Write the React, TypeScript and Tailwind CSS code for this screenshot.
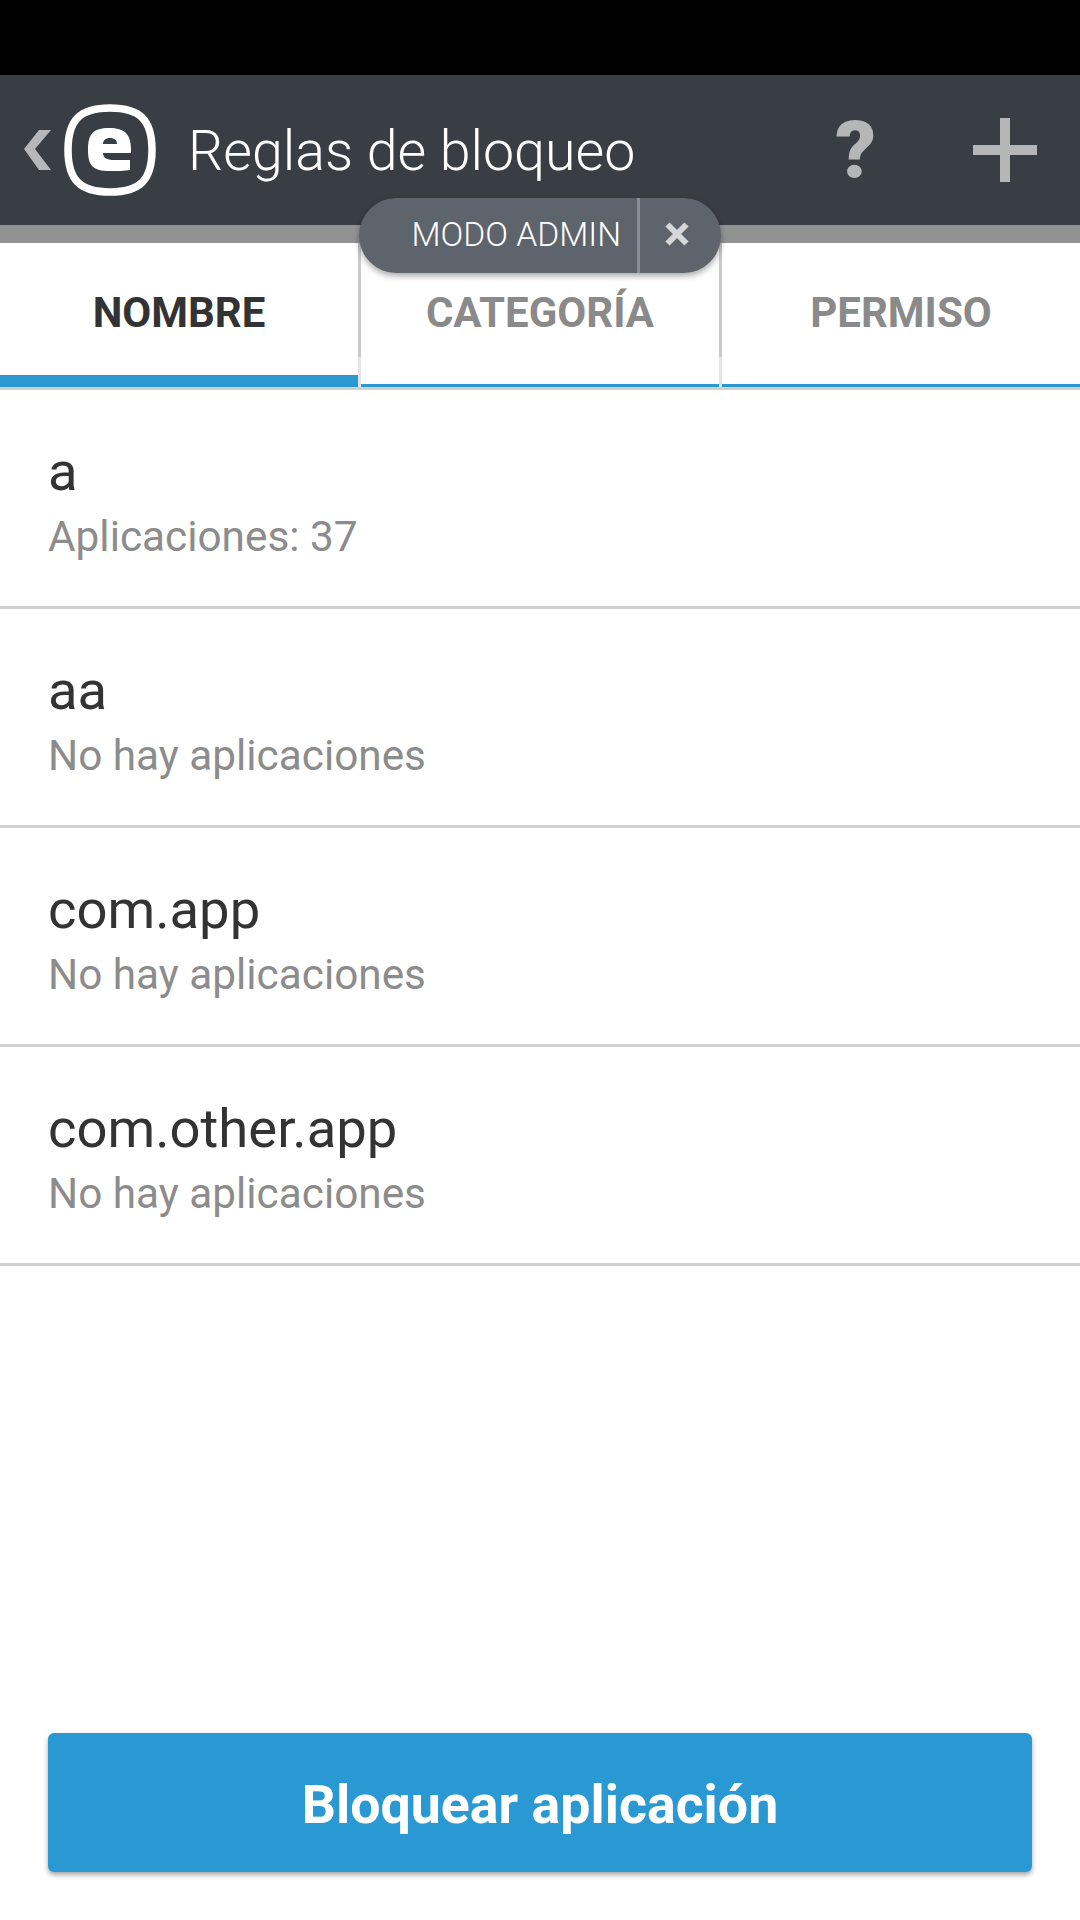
const rules = [
  { name: 'a', detail: 'Aplicaciones: 37' },
  { name: 'aa', detail: 'No hay aplicaciones' },
  { name: 'com.app', detail: 'No hay aplicaciones' },
  { name: 'com.other.app', detail: 'No hay aplicaciones' },
];

function EsetLogo() {
  return (
    <svg width="92" height="92" viewBox="0 0 92 92" className="shrink-0">
      <path
        d="M46 4 C76 4 88 16 88 46 C88 76 76 88 46 88 C16 88 4 76 4 46 C4 16 16 4 46 4 Z"
        fill="none"
        stroke="#fff"
        strokeWidth="7.5"
      />
      <path
        fillRule="evenodd"
        fill="#fff"
        d="M45 24 C61 24 67 30 67 46 L67 49 L39 49 C39 54 43 56 50 56 L66 56 L66 66 C60 67 54 67 46 67 C29 67 24 62 24 46 C24 30 29 24 45 24 Z M39 40 L53 40 C53 36 50 34 46 34 C42 34 39 36 39 40 Z"
      />
    </svg>
  );
}

function Header() {
  return (
    <div className="flex h-[150px] items-center bg-[#393d44] pl-6 font-['Roboto',sans-serif]">
      <svg width="27" height="40" viewBox="0 0 27 40" className="shrink-0">
        <polygon points="27,0 15,0 0,19 15,40 27,40 11,19" fill="#b5b7ba" />
      </svg>
      <div className="ml-[13px]">
        <EsetLogo />
      </div>
      <div className="ml-[32px] flex-1 pt-[4px] text-[55.5px] font-light leading-none text-white">Reglas de bloqueo</div>
      <div className="mr-[97px] pt-[2px] text-[80px] font-black leading-none text-[#b5b6b8]">?</div>
      <svg width="64" height="64" viewBox="0 0 64 64" className="mr-[43px] shrink-0">
        <rect x="27" y="0" width="10" height="64" fill="#b5b6b8" />
        <rect x="0" y="27" width="64" height="10" fill="#b5b6b8" />
      </svg>
    </div>
  );
}

function TabDivider() {
  return (
    <div className="flex w-[3px] flex-col">
      <div className="flex-1 bg-[#c9cacc]" />
      <div className="h-[30px] bg-[#e3e4e5]" />
    </div>
  );
}

function Tabs() {
  return (
    <div className="flex h-[147px] border-b-[3px] border-[#cfd1d3] text-[42px] font-bold">
      <div className="flex flex-1 items-center justify-center border-b-[12px] border-[#2a99d3] pt-[6px] text-[#333333]">
        NOMBRE
      </div>
      <TabDivider />
      <div className="flex flex-1 items-center justify-center border-b-[3px] border-[#2a99d3] pb-[2px] text-[#8a8a8a]">
        CATEGORÍA
      </div>
      <TabDivider />
      <div className="flex flex-1 items-center justify-center border-b-[3px] border-[#2a99d3] pb-[2px] text-[#8a8a8a]">
        PERMISO
      </div>
    </div>
  );
}

function AdminPill() {
  return (
    <div className="absolute left-[359px] top-[198px] flex h-[75px] w-[362px] items-center rounded-full bg-[#5e646c] text-[33.6px] font-light text-white shadow-[0_3px_6px_rgba(0,0,0,0.35)]">
      <div className="w-[278px] pr-4 text-right">MODO ADMIN</div>
      <div className="h-full w-[3px] bg-[#8a8f95]" />
      <svg width="24" height="24" viewBox="0 0 24 24" className="ml-[25px] shrink-0 -translate-y-[2px]">
        <path d="M2.5 2.5 L21.5 21.5 M21.5 2.5 L2.5 21.5" stroke="#d6d7d8" strokeWidth="6" />
      </svg>
    </div>
  );
}

export default function App() {
  return (
    <div className="relative flex h-[1920px] w-[1080px] flex-col overflow-hidden bg-white font-['Roboto',sans-serif]">
      <div className="h-[75px] bg-black" />
      <Header />
      <div className="h-[18px] bg-[#929292]" />
      <Tabs />
      <div>
        {rules.map((rule) => (
          <div key={rule.name} className="flex h-[219px] flex-col justify-center border-b-[3px] border-[#cfd0d1] px-[48px] pt-[7px]">
            <div className="text-[54.4px] leading-[60px] text-[#333333]">{rule.name}</div>
            <div className="mt-[10px] text-[42.3px] leading-[50px] text-[#8c8c8c]">{rule.detail}</div>
          </div>
        ))}
      </div>
      <div className="mx-[48px] mb-[48px] mt-auto flex h-[139px] items-center justify-center rounded-[6px] bg-[#2a99d3] pt-[6px] text-[53.7px] font-bold text-white shadow-[0_3px_5px_rgba(0,0,0,0.35)]">
        Bloquear aplicación
      </div>
      <AdminPill />
    </div>
  );
}
